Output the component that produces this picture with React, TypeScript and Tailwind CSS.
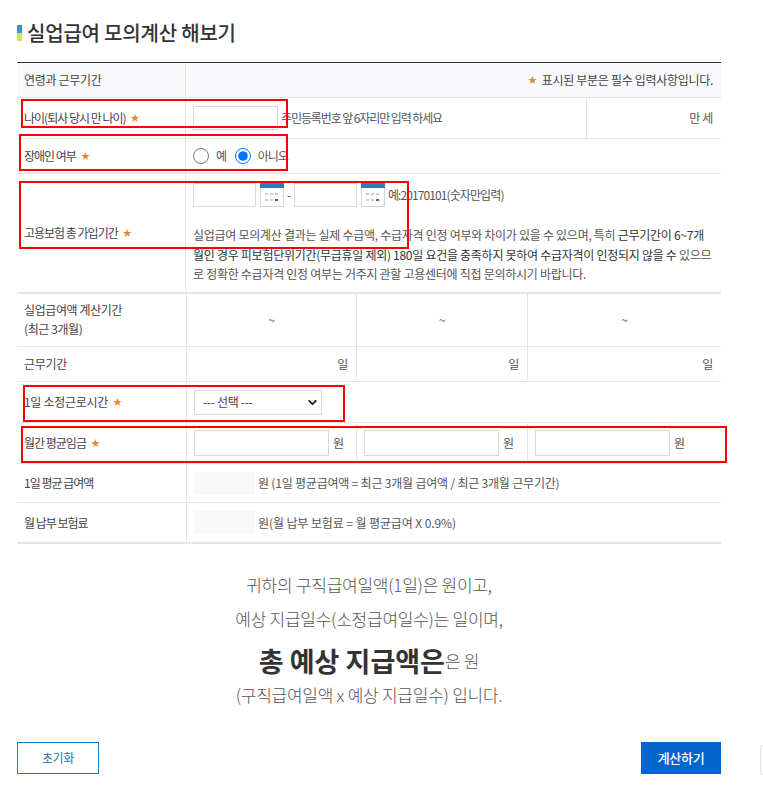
import { ChevronDown } from "lucide-react";

const Star = () => <span className="ml-[5px] text-[9px] tracking-normal text-[#e08a2c]">★</span>;

function CalendarIcon() {
  return (
    <svg width="24" height="24" viewBox="0 0 24 24" className="block shrink-0">
      <rect x="0.5" y="0.5" width="23" height="23" fill="#fff" stroke="#d5d5d5" />
      <rect x="0" y="0" width="24" height="5" fill="#2f78b7" />
      <rect x="5" y="10" width="3" height="2" fill="#c9ced6" />
      <rect x="10" y="10" width="3" height="2" fill="#c9ced6" />
      <rect x="15" y="10" width="3" height="2" fill="#c9ced6" />
      <rect x="5" y="16" width="3" height="2" fill="#c9ced6" />
      <rect x="10" y="16" width="3" height="2" fill="#c9ced6" />
      <rect x="15" y="16" width="3" height="2" fill="#3f6a99" />
    </svg>
  );
}

function Label({ children, tight }: { children: React.ReactNode; tight?: boolean }) {
  return (
    <div className={`flex w-[169px] shrink-0 items-center border-r border-[#e5e5e5] pl-[7px] text-[#444] ${tight ? "tracking-[-1px]" : ""}`}>
      {children}
    </div>
  );
}

function LowerLabel({ children, tight }: { children: React.ReactNode; tight?: boolean }) {
  return (
    <div className={`flex w-[170px] shrink-0 items-center border-r border-[#e5e5e5] pl-[7px] text-[#444] ${tight ? "tracking-[-1px]" : ""}`}>
      {children}
    </div>
  );
}

const Box = ({ className }: { className: string }) => <input className={`border border-[#d9d9d9] bg-white outline-none ${className}`} />;

const periodCols = [
  { key: "a", width: "w-[170px] border-r border-[#e5e5e5]" },
  { key: "b", width: "w-[171px] border-r border-[#e5e5e5]" },
  { key: "c", width: "flex-1" },
];

export default function App() {
  return (
    <div
      className="relative h-[793px] w-[763px] overflow-hidden bg-white text-[12px] tracking-[-0.3px] text-[#555]"
      style={{ fontFamily: '"Noto Sans CJK KR", "Noto Sans", sans-serif' }}
    >
      <div className="px-[17px] pt-[20px]">
        <div className="flex h-[26px] items-center">
          <div className="h-[16px] w-[5px] bg-[linear-gradient(#3a95d1_50%,#d5e35a_50%)]" />
          <h2 className="ml-[5px] text-[20px] font-medium tracking-[-0.2px] text-[#333]">실업급여 모의계산 해보기</h2>
        </div>

        <div className="mt-[16px] w-[704px] border-t border-[#333]">
          <div className="flex h-[35px] border-b border-[#e5e5e5] bg-[#f9f9fb] pb-px">
            <Label>연령과 근무기간</Label>
            <div className="flex flex-1 items-center justify-end pr-[8px] text-[#444]">
              <span className="mr-[5px] text-[9px] text-[#e08a2c]">★</span>표시된 부분은 필수 입력사항입니다.
            </div>
          </div>

          <div className="flex h-[41px] border-b border-[#e5e5e5]">
            <Label tight>
              나이(퇴사 당시 만 나이)
              <Star />
            </Label>
            <div className="flex flex-1 items-center border-r border-[#e5e5e5] pl-[7px]">
              <Box className="h-[24px] w-[85px]" />
              <span className="ml-[3px] tracking-[-1.1px]">주민등록번호 앞 6자리만 입력 하세요</span>
            </div>
            <div className="flex w-[134px] items-center justify-end pr-[8px]">만 세</div>
          </div>

          <div className="flex h-[35px] border-b border-[#e5e5e5]">
            <Label tight>
              장애인 여부
              <Star />
            </Label>
            <div className="flex flex-1 items-center pl-[7px]">
              <input type="radio" name="disabled" className="m-0 size-[16px]" />
              <span className="ml-[7px]">예</span>
              <input type="radio" name="disabled" defaultChecked className="m-0 ml-[8px] size-[16px] accent-[#0075ff]" />
              <span className="ml-[7px] tracking-[-1px]">아니오</span>
            </div>
          </div>

          <div className="flex h-[120px] border-b-2 border-[#e5e5e5]">
            <Label tight>
              고용보험 총 가입기간
              <Star />
            </Label>
            <div className="flex-1 pl-[7px] pt-[8px]">
              <div className="flex h-[26px] items-center">
                <Box className="h-[24px] w-[63px]" />
                <span className="ml-[4px] flex">
                  <CalendarIcon />
                </span>
                <span className="mx-[3px]">-</span>
                <Box className="h-[24px] w-[63px]" />
                <span className="ml-[4px] flex">
                  <CalendarIcon />
                </span>
                <span className="ml-[3px] tracking-[-0.9px]">예:20170101(숫자만입력)</span>
              </div>
              <p className="mt-[17px] w-[530px] text-[12px] leading-[19.5px] tracking-[-0.28px] whitespace-nowrap">
                실업급여 모의계산 결과는 실제 수급액, 수급자격 인정 여부와 차이가 있을 수 있으며, 특히 <span className="text-[#333]">근무기간이 6~7개</span>
                <br />
                <span className="text-[#333]">월인 경우 피보험단위기간(무급휴일 제외) 180일 요건을 충족하지 못하여 수급자격이 인정되지 않을 수</span> 있으므
                <br />로 정확한 수급자격 인정 여부는 거주지 관할 고용센터에 직접 문의하시기 바랍니다.
              </p>
            </div>
          </div>

          <div className="flex h-[53px] border-b border-[#e5e5e5]">
            <LowerLabel>
              <span className="pb-[3px] leading-[19px] tracking-[-0.4px]">
                실업급여액 계산기간
                <br />
                (최근 3개월)
              </span>
            </LowerLabel>
            {periodCols.map((c) => (
              <div key={c.key} className={`flex items-center justify-center ${c.width}`}>
                ~
              </div>
            ))}
          </div>

          <div className="flex h-[35px] border-b border-[#e5e5e5] pb-px">
            <LowerLabel>근무기간</LowerLabel>
            {periodCols.map((c) => (
              <div key={c.key} className={`flex items-center justify-end pr-[8px] ${c.width}`}>
                일
              </div>
            ))}
          </div>

          <div className="flex h-[41px] border-b border-[#e5e5e5]">
            <LowerLabel>
              1일 소정근로시간
              <Star />
            </LowerLabel>
            <div className="flex flex-1 items-center pl-[7px]">
              <div className="relative h-[25px] w-[128px]">
                <select className="h-full w-full appearance-none border border-[#d9d9d9] bg-white pl-[8px] text-[#444] outline-none">
                  <option>--- 선택 ---</option>
                </select>
                <ChevronDown size={13} strokeWidth={3.5} className="pointer-events-none absolute right-[3px] top-[6px] text-[#222]" />
              </div>
            </div>
          </div>

          <div className="flex h-[41px] border-b border-[#e5e5e5]">
            <LowerLabel tight>
              월간 평균임금
              <Star />
            </LowerLabel>
            {periodCols.map((c) => (
              <div key={c.key} className={`flex items-center pl-[7px] ${c.width}`}>
                <Box className="h-[26px] w-[135px]" />
                <span className="ml-[4px]">원</span>
              </div>
            ))}
          </div>

          <div className="flex h-[39px] border-b border-[#e5e5e5]">
            <LowerLabel tight>1일 평균 급여액</LowerLabel>
            <div className="flex flex-1 items-center pl-[7px]">
              <div className="h-[23px] w-[61px] bg-[#f8f8f8]" />
              <span className="ml-[3px] tracking-[-0.2px]">원 (1일 평균급여액 = 최근 3개월 급여액 / 최근 3개월 근무기간)</span>
            </div>
          </div>

          <div className="flex h-[41px] border-b-2 border-[#e5e5e5]">
            <LowerLabel tight>월 납부 보험료</LowerLabel>
            <div className="flex flex-1 items-center pl-[7px]">
              <div className="h-[23px] w-[61px] bg-[#f8f8f8]" />
              <span className="ml-[3px] tracking-[-0.1px]">원(월 납부 보험료 = 월 평균급여 X 0.9%)</span>
            </div>
          </div>
        </div>

        <div className="mt-[24px] w-[704px] text-center text-[17px] font-light tracking-[-0.25px] text-[#555]">
          <p className="h-[34px] leading-[34px]">귀하의 구직급여일액(1일)은 원이고,</p>
          <p className="h-[34px] leading-[34px]">예상 지급일수(소정급여일수)는 일이며,</p>
          <p className="flex h-[44px] items-center justify-center pt-[6px]">
            <strong className="text-[27px] font-bold tracking-normal text-[#333]">총 예상 지급액은</strong>은 원
          </p>
          <p className="h-[30px] leading-[30px]">(구직급여일액 x 예상 지급일수) 입니다.</p>
        </div>

        <div className="mt-[32px] flex w-[704px] justify-between">
          <button className="h-[32px] w-[82px] border border-[#1d7cba] bg-white text-[#1d6fa8]">초기화</button>
          <button className="h-[32px] w-[80px] bg-[#0066cc] text-[13px] font-medium text-white">계산하기</button>
        </div>
      </div>

      {/* annotation boxes drawn over the form */}
      <div className="absolute left-[21px] top-[99px] h-[29px] w-[267px] border-2 border-[#ff0000]" />
      <div className="absolute left-[19px] top-[134px] h-[37px] w-[269px] border-2 border-[#ff0000]" />
      <div className="absolute left-[19px] top-[181px] h-[68px] w-[390px] border-2 border-[#ff0000]" />
      <div className="absolute left-[23px] top-[385px] h-[37px] w-[322px] border-2 border-[#ff0000]" />
      <div className="absolute left-[21px] top-[426px] h-[37px] w-[706px] border-2 border-[#ff0000]" />
      <div className="absolute left-[760px] top-[745px] h-[30px] w-[8px] rounded-[3px] border border-[#e5e5e5]" />
    </div>
  );
}
